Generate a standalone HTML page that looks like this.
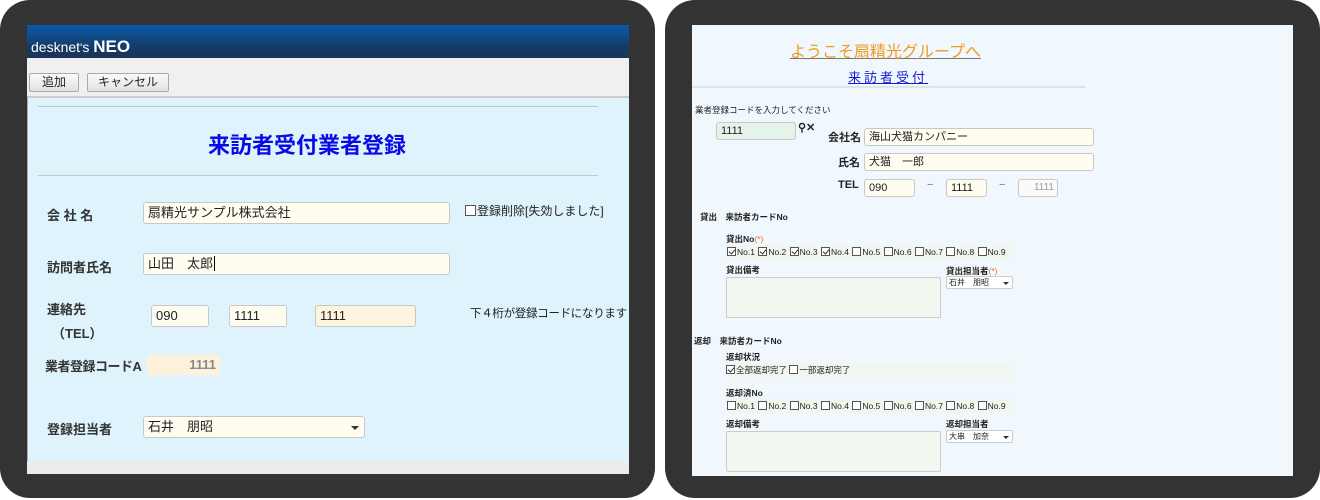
<!DOCTYPE html>
<html><head><meta charset="utf-8"><style>
*{margin:0;padding:0;box-sizing:border-box}
body{width:1320px;height:500px;background:#fff;position:relative;overflow:hidden;font-family:"Liberation Sans","Noto Sans CJK JP",sans-serif;color:#222}
.a{position:absolute;white-space:nowrap}
.panel{position:absolute;background:#333;border-radius:30px}
.inp{position:absolute;border:1px solid #c8c8c8;border-radius:3px;background:#fffdf0;font-size:13px;padding-left:4px;line-height:20px}
.cb{display:inline-block;width:9px;height:9px;border:1px solid #555;vertical-align:-1px;margin-right:1px;position:relative;background:#fff}
.cb.k:after{content:"";position:absolute;left:2px;top:0px;width:3px;height:5px;border:solid #333;border-width:0 1.5px 1.5px 0;transform:rotate(40deg)}
.s{font-size:8.5px}
.b{font-weight:bold}
.lb{font-weight:bold;font-size:13px;color:#333}
</style></head><body>
<div class="panel" style="left:0;top:0;width:655px;height:498px"></div>
<div class="panel" style="left:665px;top:0;width:655px;height:498px"></div>

<!-- LEFT -->
<div class="a" style="left:27px;top:25px;width:602px;height:449px;background:#ececec"></div>
<div class="a" style="left:27px;top:25px;width:602px;height:33px;background:linear-gradient(#0b5aa8,#143a66 70%,#1b3556)"></div>
<div class="a" style="left:31px;top:37px;color:#fff;font-size:14px">desknet<span style="font-size:12px">'</span>s <b style="font-size:17px">NEO</b></div>
<div class="a" style="left:27px;top:58px;width:602px;height:38px;background:#f0f0f0"></div>
<div class="a" style="left:29px;top:73px;width:50px;height:19px;border:1px solid #aaa;border-radius:2px;background:linear-gradient(#fafafa,#e2e2e2);font-size:12px;text-align:center;line-height:17px">追加</div>
<div class="a" style="left:87px;top:73px;width:82px;height:19px;border:1px solid #aaa;border-radius:2px;background:linear-gradient(#fafafa,#e2e2e2);font-size:12px;text-align:center;line-height:17px">キャンセル</div>
<div class="a" style="left:27px;top:96px;width:602px;height:365px;background:#def3fc;border-top:2px solid #ccc;border-left:1px solid #aaa"></div>
<div class="a" style="left:38px;top:106px;width:560px;height:1px;background:#bcc"></div>
<div class="a" style="left:38px;top:175px;width:560px;height:1px;background:#bcc"></div>
<div class="a b" style="left:208px;top:128px;font-size:22px;color:#0a0ae6">来訪者受付業者登録</div>
<div class="a lb" style="left:47px;top:205px">会 社 名</div>
<div class="inp" style="left:143px;top:202px;width:307px;height:22px">扇精光サンプル株式会社</div>
<div class="a" style="left:465px;top:202px;font-size:12px"><span class="cb" style="width:11px;height:11px"></span>登録削除[失効しました]</div>
<div class="a lb" style="left:47px;top:257px">訪問者氏名</div>
<div class="inp" style="left:143px;top:253px;width:307px;height:22px">山田　太郎<span style="border-left:1px solid #000;margin-left:1px"></span></div>
<div class="a lb" style="left:47px;top:299px">連絡先</div>
<div class="a lb" style="left:52px;top:323px">（TEL）</div>
<div class="inp" style="left:151px;top:305px;width:58px;height:22px">090</div>
<div class="inp" style="left:229px;top:305px;width:58px;height:22px">1111</div>
<div class="inp" style="left:315px;top:305px;width:101px;height:22px;background:#fff4e0">1111</div>
<div class="a" style="left:470px;top:305px;font-size:11.5px;letter-spacing:-0.3px">下４桁が登録コードになります</div>
<div class="a lb" style="left:45px;top:356px;letter-spacing:-0.5px">業者登録コードA</div>
<div class="a" style="left:147px;top:355px;width:73px;height:20px;background:#fdf1dc;font-size:13px;font-weight:bold;color:#888;text-align:right;padding-right:4px;line-height:20px">1111</div>
<div class="a lb" style="left:47px;top:419px">登録担当者</div>
<div class="inp" style="left:143px;top:416px;width:222px;height:22px">石井　朋昭<span style="position:absolute;right:5px;top:9px;border:4px solid transparent;border-top:4px solid #333;border-bottom:0"></span></div>

<!-- RIGHT -->
<div class="a" style="left:692px;top:25px;width:601px;height:451px;background:#f0f8fd"></div>
<div class="a" style="left:790px;top:38px;font-size:16px;color:#f09a1e;text-decoration:underline;text-decoration-color:#777">ようこそ扇精光グループへ</div>
<div class="a" style="left:848px;top:67px;font-size:13px;color:#1a1ad0;text-decoration:underline;letter-spacing:3px">来訪者受付</div>
<div class="a" style="left:692px;top:86px;width:393px;height:2px;background:#dde4e8"></div>
<div class="a s" style="left:695px;top:104px">業者登録コードを入力してください</div>
<div class="inp" style="left:716px;top:122px;width:80px;height:18px;background:#e4f4e8;font-size:11px;line-height:16px">1111</div>
<div class="a" style="left:798px;top:121px;font-size:11px;font-weight:bold">⚲✕</div>
<div class="a b" style="left:828px;top:129px;font-size:11px">会社名</div>
<div class="inp" style="left:864px;top:128px;width:230px;height:18px;font-size:11px;line-height:16px">海山犬猫カンパニー</div>
<div class="a b" style="left:838px;top:154px;font-size:11px">氏名</div>
<div class="inp" style="left:864px;top:153px;width:230px;height:18px;font-size:11px;line-height:16px">犬猫　一郎</div>
<div class="a b" style="left:838px;top:179px;font-size:11px">TEL</div>
<div class="inp" style="left:864px;top:179px;width:51px;height:18px;font-size:11px;line-height:16px">090</div>
<div class="a" style="left:927px;top:179px;font-size:11px;color:#777">−</div>
<div class="inp" style="left:946px;top:179px;width:41px;height:18px;font-size:11px;line-height:16px">1111</div>
<div class="a" style="left:999px;top:179px;font-size:11px;color:#777">−</div>
<div class="inp" style="left:1018px;top:179px;width:40px;height:18px;font-size:10px;line-height:16px;color:#999;background:#fafafa;text-align:right;padding-right:3px">1111</div>
<div class="a s b" style="left:700px;top:211px">貸出　来訪者カードNo</div>
<div class="a s b" style="left:726px;top:233px">貸出No<span style="color:#f07020;font-weight:normal">(*)</span></div>
<div class="a s" style="left:726px;top:245px;width:288px;height:14px;background:#f1f7ef;padding-left:1px;line-height:14px;word-spacing:1px"><span class="cb k"></span>No.1 <span class="cb k"></span>No.2 <span class="cb k"></span>No.3 <span class="cb k"></span>No.4 <span class="cb"></span>No.5 <span class="cb"></span>No.6 <span class="cb"></span>No.7 <span class="cb"></span>No.8 <span class="cb"></span>No.9</div>
<div class="a s b" style="left:726px;top:264px">貸出備考</div>
<div class="a" style="left:726px;top:277px;width:215px;height:41px;background:#f2f8f0;border:1px solid #ccc;border-radius:2px"></div>
<div class="a s b" style="left:946px;top:265px">貸出担当者<span style="color:#f07020;font-weight:normal">(*)</span></div>
<div class="a" style="left:946px;top:276px;width:67px;height:13px;background:#fff;border:1px solid #ccc;border-radius:2px;font-size:8px;padding-left:2px;line-height:11px">石井　朋昭<span style="position:absolute;right:3px;top:5px;border:3px solid transparent;border-top:3px solid #333;border-bottom:0"></span></div>
<div class="a s b" style="left:694px;top:335px">返却　来訪者カードNo</div>
<div class="a s b" style="left:726px;top:351px">返却状況</div>
<div class="a s" style="left:726px;top:363px;width:288px;height:14px;background:#f1f7ef;line-height:14px"><span class="cb k"></span>全部返却完了 <span class="cb"></span>一部返却完了</div>
<div class="a s b" style="left:726px;top:387px">返却済No</div>
<div class="a s" style="left:726px;top:399px;width:288px;height:14px;background:#f1f7ef;padding-left:1px;line-height:14px;word-spacing:1px"><span class="cb"></span>No.1 <span class="cb"></span>No.2 <span class="cb"></span>No.3 <span class="cb"></span>No.4 <span class="cb"></span>No.5 <span class="cb"></span>No.6 <span class="cb"></span>No.7 <span class="cb"></span>No.8 <span class="cb"></span>No.9</div>
<div class="a s b" style="left:726px;top:418px">返却備考</div>
<div class="a" style="left:726px;top:431px;width:215px;height:41px;background:#f2f8f0;border:1px solid #ccc;border-radius:2px"></div>
<div class="a s b" style="left:946px;top:418px">返却担当者</div>
<div class="a" style="left:946px;top:430px;width:67px;height:13px;background:#fff;border:1px solid #ccc;border-radius:2px;font-size:8px;padding-left:2px;line-height:11px">大串　加奈<span style="position:absolute;right:3px;top:5px;border:3px solid transparent;border-top:3px solid #333;border-bottom:0"></span></div>
</body></html>
